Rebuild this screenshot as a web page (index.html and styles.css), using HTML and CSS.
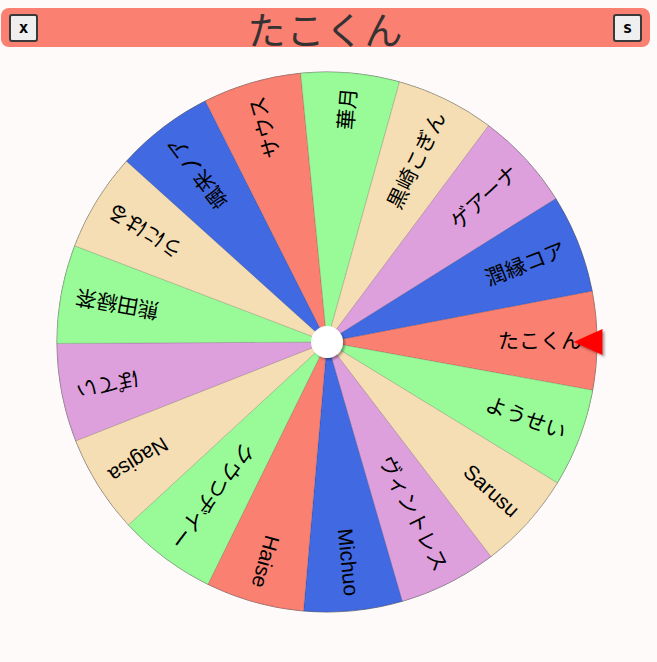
FILE: index.html
```html
<!DOCTYPE html>
<html lang="ja">
<head>
<meta charset="utf-8">
<title>たこくん</title>
<link rel="stylesheet" href="styles.css">
</head>
<body>
<header class="topbar">
  <button class="btn" type="button">x</button>
  <h1 class="title">たこくん</h1>
  <button class="btn" type="button">s</button>
</header>
<main class="stage">
  <svg class="wheel" width="560" height="560" viewBox="-280 -280 560 560">
    <defs>
      <filter id="shade" x="-50%" y="-50%" width="200%" height="200%">
        <feDropShadow dx="2" dy="2" stdDeviation="1.2" flood-color="#000" flood-opacity="0.35"/>
      </filter>
      <path id="wedge" d="M0 0L265.4 -49.61A270 270 0 0 1 265.4 49.61Z"/>
    </defs>
    <circle class="rim" r="270"/>
    <g class="segments">
      <g transform="rotate(-0.3)"><use href="#wedge" class="seg salmon"/><text class="lbl" x="255">たこくん</text></g>
      <g transform="rotate(20.88)"><use href="#wedge" class="seg green"/><text class="lbl" x="255">ようせい</text></g>
      <g transform="rotate(42.05)"><use href="#wedge" class="seg wheat"/><text class="lbl" x="255">Sarusu</text></g>
      <g transform="rotate(63.23)"><use href="#wedge" class="seg plum"/><text class="lbl" x="255">ヴィントレス</text></g>
      <g transform="rotate(84.41)"><use href="#wedge" class="seg blue"/><text class="lbl" x="255">Michuo</text></g>
      <g transform="rotate(105.58)"><use href="#wedge" class="seg salmon"/><text class="lbl" x="255">Haise</text></g>
      <g transform="rotate(126.76)"><use href="#wedge" class="seg green"/><text class="lbl" x="255">クウつヂイー</text></g>
      <g transform="rotate(147.94)"><use href="#wedge" class="seg wheat"/><text class="lbl" x="255">Nagisa</text></g>
      <g transform="rotate(169.11)"><use href="#wedge" class="seg plum"/><text class="lbl" x="255">ぽてい</text></g>
      <g transform="rotate(190.29)"><use href="#wedge" class="seg green"/><text class="lbl" x="255">熊田緑茶</text></g>
      <g transform="rotate(211.46)"><use href="#wedge" class="seg wheat"/><text class="lbl" x="255">うにはる</text></g>
      <g transform="rotate(232.64)"><use href="#wedge" class="seg blue"/><text class="lbl" x="255">颯来ノア</text></g>
      <g transform="rotate(253.82)"><use href="#wedge" class="seg salmon"/><text class="lbl" x="255">サウス</text></g>
      <g transform="rotate(274.99)"><use href="#wedge" class="seg green"/><text class="lbl" x="255">華月</text></g>
      <g transform="rotate(296.17)"><use href="#wedge" class="seg wheat"/><text class="lbl" x="255">黒崎こぎん</text></g>
      <g transform="rotate(317.35)"><use href="#wedge" class="seg plum"/><text class="lbl" x="255">ゲアーナ</text></g>
      <g transform="rotate(338.52)"><use href="#wedge" class="seg blue"/><text class="lbl" x="255">潤縁コア</text></g>
    </g>
    <circle class="hub" r="16" filter="url(#shade)"/>
    <polygon class="pointer" points="246.5,0 275.5,-13 275.5,13" filter="url(#shade)"/>
  </svg>
</main>
</body>
</html>
```
FILE: styles.css
```css
html, body {
  margin: 0;
  padding: 0;
}

body {
  background: #fffafa;
  font-family: "Liberation Sans", "Noto Sans CJK JP", sans-serif;
}

.topbar {
  display: flex;
  align-items: center;
  justify-content: space-between;
  height: 39px;
  margin: 8px 7px 0 1px;
  padding: 0 8px;
  background: #fa8072;
  border-radius: 8px;
}

.btn {
  box-sizing: border-box;
  width: 29px;
  height: 28px;
  margin-top: 1px;
  padding: 0;
  background: #efefef;
  border: 2px solid #3a3a3a;
  border-radius: 3px;
  color: #000;
  font: bold 16px/1 "DejaVu Sans Mono", monospace;
}

.title {
  margin: 0;
  font-family: "Noto Sans CJK JP", sans-serif;
  font-size: 38px;
  font-weight: 400;
  line-height: 39px;
  color: #333;
  letter-spacing: 1px;
}

.stage {
  display: flex;
  justify-content: center;
  width: 653px;
  padding-top: 15px;
}

.wheel {
  display: block;
  overflow: visible;
}

.rim {
  fill: none;
  stroke: #8a8a8a;
  stroke-width: 1;
}

.seg {
  stroke: rgba(0, 0, 0, 0.22);
  stroke-width: 0.6;
}

.salmon { fill: #fa8072; }
.green  { fill: #98fb98; }
.wheat  { fill: #f5deb3; }
.plum   { fill: #dda0dd; }
.blue   { fill: #4169e1; }

.lbl {
  font-family: "Liberation Sans", "Noto Sans CJK JP", sans-serif;
  font-size: 21px;
  fill: #000;
  text-anchor: end;
  dominant-baseline: central;
}

.hub {
  fill: #fff;
}

.pointer {
  fill: #ff0000;
}
```
